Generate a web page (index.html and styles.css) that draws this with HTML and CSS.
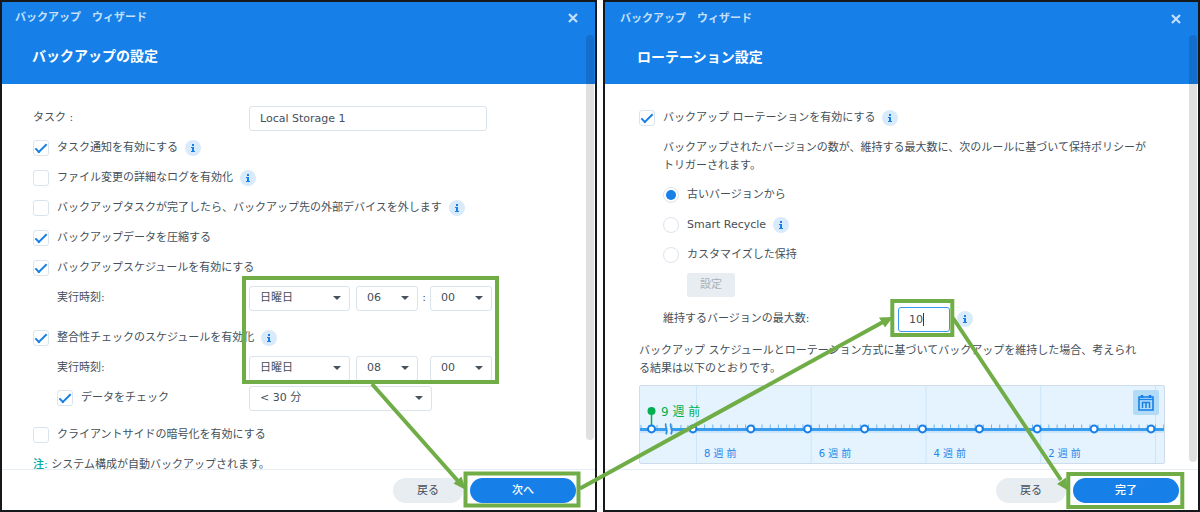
FILE: index.html
```html
<!DOCTYPE html>
<html lang="ja">
<head>
<meta charset="utf-8">
<meta name="viewport" content="width=device-width, initial-scale=1">
<title>バックアップ ウィザード</title>
<link rel="stylesheet" href="styles.css">
</head>
<body>
<svg class="sprite" aria-hidden="true">
  <symbol id="icon-info" viewBox="0 0 16 16">
    <circle cx="8" cy="8" r="8" fill="#d9eafb"/>
    <path d="M7 4h2v2H7zM6 7h3v4h1v1H6v-1h1V8H6z" fill="#167fe8"/>
  </symbol>
  <symbol id="icon-close" viewBox="0 0 10 10">
    <path d="M1 1l8 8M9 1l-8 8" stroke="#c4e0fb" stroke-width="2.2" fill="none"/>
  </symbol>
</svg>
<main class="stage">
  <section class="wizard">
    <header class="wizard-head">
      <div class="titlebar">
        <span>バックアップ　ウィザード</span>
        <button class="close" type="button" aria-label="閉じる"><svg><use href="#icon-close"/></svg></button>
      </div>
      <h1>バックアップの設定</h1>
    </header>
    <div class="wizard-body">
      <div class="row">
        <label class="field-label" for="task">タスク :</label>
        <input class="text-input" id="task" type="text" value="Local Storage 1">
      </div>
      <div class="row">
        <label class="choice"><input type="checkbox" checked>タスク通知を有効にする</label>
        <button class="info" type="button" aria-label="情報"><svg><use href="#icon-info"/></svg></button>
      </div>
      <div class="row">
        <label class="choice"><input type="checkbox">ファイル変更の詳細なログを有効化</label>
        <button class="info" type="button" aria-label="情報"><svg><use href="#icon-info"/></svg></button>
      </div>
      <div class="row">
        <label class="choice"><input type="checkbox">バックアップタスクが完了したら、バックアップ先の外部デバイスを外します</label>
        <button class="info" type="button" aria-label="情報"><svg><use href="#icon-info"/></svg></button>
      </div>
      <div class="row">
        <label class="choice"><input type="checkbox" checked>バックアップデータを圧縮する</label>
      </div>
      <div class="row">
        <label class="choice"><input type="checkbox" checked>バックアップスケジュールを有効にする</label>
      </div>
      <div class="row nested">
        <label class="field-label" for="day1">実行時刻:</label>
        <span class="select day"><select id="day1"><option>日曜日</option></select></span>
        <span class="select time"><select aria-label="時"><option>06</option></select></span>
        <span class="colon">:</span>
        <span class="select time"><select aria-label="分"><option>00</option></select></span>
      </div>
      <div class="row group">
        <label class="choice"><input type="checkbox" checked>整合性チェックのスケジュールを有効化</label>
        <button class="info" type="button" aria-label="情報"><svg><use href="#icon-info"/></svg></button>
      </div>
      <div class="row nested">
        <label class="field-label" for="day2">実行時刻:</label>
        <span class="select day"><select id="day2"><option>日曜日</option></select></span>
        <span class="select time"><select aria-label="時"><option>08</option></select></span>
        <span class="colon"></span>
        <span class="select time"><select aria-label="分"><option>00</option></select></span>
      </div>
      <div class="row nested">
        <label class="choice field-label"><input type="checkbox" checked>データをチェック</label>
        <span class="select limit"><select aria-label="チェック時間"><option>&lt; 30 分</option></select></span>
      </div>
      <div class="row group">
        <label class="choice"><input type="checkbox">クライアントサイドの暗号化を有効にする</label>
      </div>
      <p class="note"><b>注:</b> システム構成が自動バックアップされます。</p>
    </div>
    <footer class="wizard-foot">
      <button class="btn" type="button">戻る</button>
      <button class="btn primary" type="button">次へ</button>
    </footer>
    <div class="scroll-thumb"></div>
  </section>

  <section class="wizard rotation">
    <header class="wizard-head">
      <div class="titlebar">
        <span>バックアップ　ウィザード</span>
        <button class="close" type="button" aria-label="閉じる"><svg><use href="#icon-close"/></svg></button>
      </div>
      <h1>ローテーション設定</h1>
    </header>
    <div class="wizard-body">
      <div class="row">
        <label class="choice"><input type="checkbox" checked>バックアップ ローテーションを有効にする</label>
        <button class="info" type="button" aria-label="情報"><svg><use href="#icon-info"/></svg></button>
      </div>
      <p class="policy">バックアップされたバージョンの数が、維持する最大数に、次のルールに基づいて保持ポリシーが<br>トリガーされます。</p>
      <div class="row nested">
        <label class="choice"><input type="radio" name="policy" checked>古いバージョンから</label>
      </div>
      <div class="row nested">
        <label class="choice"><input type="radio" name="policy">Smart Recycle</label>
        <button class="info" type="button" aria-label="情報"><svg><use href="#icon-info"/></svg></button>
      </div>
      <div class="row nested">
        <label class="choice"><input type="radio" name="policy">カスタマイズした保持</label>
      </div>
      <div class="row deep">
        <button class="btn-flat" type="button" disabled>設定</button>
      </div>
      <div class="row nested versions">
        <label class="versions-label" for="max">維持するバージョンの最大数:</label>
        <span class="number"><input id="max" type="text" value="10"><i class="caret"></i></span>
        <button class="info" type="button" aria-label="情報"><svg><use href="#icon-info"/></svg></button>
      </div>
      <p class="result">バックアップ スケジュールとローテーション方式に基づいてバックアップを維持した場合、考えられ<br>る結果は以下のとおりです。</p>
      <div class="timeline">
        <svg class="chart" viewBox="0 0 525 77">
          <path d="M56.5 0v77M171.5 0v77M286.5 0v77M401.5 0v77M516.5 0v77" stroke="#c9e5f9"/>
          <path d="M1 39v4M9 39v4M17 39v4M32 39v4M41 39v4M48 39v4" stroke="#6fb5f0"/>
          <path d="M56 41H525" stroke="#6fb5f0" stroke-width="5" stroke-dasharray="1 7.214"/>
          <path d="M0 43.5H525" stroke="#3a9cec" stroke-width="3"/>
          <path d="M0 46H525" stroke="#b5d9f6"/>
          <path d="M26 38h5v10h-5z" fill="#e5f3fe"/>
          <path d="M26 37.500c-2 3 3 6 0 11M31 37.500c-2 3 3 6 0 11" stroke="#2f8fe8" stroke-width="1.700" fill="none"/>
          <path d="M11.5 25v16" stroke="#00b050" stroke-width="1.5"/>
          <circle cx="11.500" cy="25" r="4" fill="#00b050"/>
          <g fill="#fff" stroke="#167fe8" stroke-width="2">
            <circle cx="11.500" cy="43" r="3.500"/><circle cx="53" cy="43" r="3.500"/><circle cx="111" cy="43" r="3.500"/><circle cx="168" cy="43" r="3.500"/><circle cx="225" cy="43" r="3.500"/><circle cx="283" cy="43" r="3.500"/><circle cx="340" cy="43" r="3.500"/><circle cx="398" cy="43" r="3.500"/><circle cx="455" cy="43" r="3.500"/><circle cx="512" cy="43" r="3.500"/>
          </g>
          <text class="oldest" x="21" y="30">9 週 前</text>
          <text x="64" y="71">8 週 前</text>
          <text x="179" y="71">6 週 前</text>
          <text x="294" y="71">4 週 前</text>
          <text x="409" y="71">2 週 前</text>
        </svg>
        <button class="calendar" type="button" aria-label="カレンダー">
          <svg viewBox="0 0 16 16" fill="none" stroke="#167fe8">
            <path d="M1 2h14v13H1z" stroke-width="1.600"/>
            <path d="M1 4.500h14" stroke-width="1.300"/>
            <path d="M4 0v3M12 0v3" stroke-width="2.500"/>
            <path d="M4.500 13V7.500h7V13M8 7.500V13" stroke-width="1.500"/>
          </svg>
        </button>
      </div>
    </div>
    <footer class="wizard-foot">
      <button class="btn" type="button">戻る</button>
      <button class="btn primary" type="button">完了</button>
    </footer>
    <div class="scroll-thumb"></div>
  </section>

  <svg class="callouts" viewBox="0 0 1200 512" aria-hidden="true">
    <g fill="none" stroke="#70ad47" stroke-width="4">
      <rect x="244" y="278" width="253" height="104"/>
      <rect x="465.500" y="473.500" width="113" height="32"/>
      <rect x="892.300" y="301" width="60" height="34"/>
      <rect x="1068.300" y="474" width="114" height="33"/>
      <path d="M372 384L458 481M580 488.500L883 322M953 318L1061 480"/>
    </g>
    <path d="M466 490L453.500 483.500L461.500 476.500zM893 317L885 327.500L879 317.500zM1068 490.500L1057 484L1066 477.500z" fill="#70ad47"/>
  </svg>
</main>
</body>
</html>
```
FILE: styles.css
```css
*, *::before, *::after { box-sizing: border-box; }

body {
  margin: 0;
  background: #fff;
  color: #454f59;
  font: 11px/18px "DejaVu Sans", "Noto Sans CJK JP", sans-serif;
}

input, select, button { font: inherit; color: inherit; }
button { border: 0; padding: 0; background: none; }
p { margin: 0; }
.sprite { display: none; }

.stage {
  position: relative;
  display: flex;
  gap: 6px;
  min-height: 100vh;
}

.wizard {
  position: relative;
  flex: 1 1 0;
  min-width: 0;
  display: flex;
  flex-direction: column;
  height: 100vh;
  border: 2px solid #16191c;
}

.wizard-head {
  flex: none;
  height: 82px;
  padding: 7px 17px 0 13px;
  background: #167fe8;
  color: #fff;
}
.titlebar {
  display: flex;
  justify-content: space-between;
  align-items: center;
  color: #c4e0fb;
  font-weight: 700;
}
.close { display: flex; }
.close svg { width: 10px; height: 10px; }
h1 {
  margin: 18px 0 0 17px;
  font-size: 14px;
  line-height: 22px;
  font-weight: 700;
}

.wizard-body {
  flex: 1;
  min-height: 0;
  overflow: hidden;
  padding: 19px 30px 0 31px;
}
.row { display: flex; align-items: center; height: 30px; }
.nested { padding-left: 24px; }
.deep { padding-left: 48px; }
.group { margin-top: 10px; }
.group:last-of-type { margin-top: 7px; }
.field-label { flex: none; width: 216px; }
.nested .field-label { width: 192px; }

.choice { display: flex; align-items: center; gap: 8px; white-space: nowrap; }
.choice input {
  appearance: none;
  flex: none;
  display: grid;
  place-items: center;
  width: 16px;
  height: 16px;
  margin: 0;
  border: 1px solid #dbe4ed;
  border-radius: 3px;
  background: #fff;
}
.choice input[type="radio"] { border-radius: 50%; }
.choice input[type="checkbox"]:checked::before {
  content: "";
  width: 12px;
  height: 6px;
  margin-bottom: 3px;
  border: solid #167fe8;
  border-width: 0 0 2px 2px;
  transform: rotate(-45deg);
}
.choice input[type="radio"]:checked::before {
  content: "";
  width: 10px;
  height: 10px;
  border-radius: 50%;
  background: #167fe8;
}

.info { display: flex; margin-left: 7px; }
.info svg { width: 16px; height: 16px; }

.text-input, .select select {
  height: 25px;
  border: 1px solid #dbe4ed;
  border-radius: 3px;
  background: #fff;
  padding: 0 10px;
}
.text-input { width: 238px; }
.select { position: relative; display: flex; }
.select select { appearance: none; width: 100%; }
.select::after {
  content: "";
  position: absolute;
  right: 9px;
  top: 10px;
  border: 4px solid transparent;
  border-top-color: #46525e;
  border-bottom: 0;
  pointer-events: none;
}
.day { width: 101px; margin-right: 6px; }
.time { width: 62px; }
.limit { width: 183px; }
.colon { width: 12px; text-align: center; }

.note { margin-top: 6px; }
.note b { color: #00a99d; font-weight: 500; }

.wizard-foot {
  flex: none;
  display: flex;
  justify-content: flex-end;
  gap: 7px;
  height: 41px;
  padding: 8px 19px 0;
  border-top: 1px solid #e6edf3;
}
.btn {
  width: 70px;
  height: 25px;
  border-radius: 13px;
  background: #e8edf1;
}
.primary { width: 106px; background: #167fe8; color: #fff; font-weight: 500; }

.scroll-thumb {
  position: absolute;
  top: 33px;
  right: 1px;
  bottom: 70px;
  width: 8px;
  border-radius: 4px;
  background: rgba(0, 0, 0, 0.12);
}

.rotation .wizard-head { padding-left: 15px; }
.rotation .titlebar { padding-top: 1px; }
.rotation .wizard-body { padding: 19px 33px 0 34px; }
.rotation .scroll-thumb { bottom: 48px; }
.policy { margin: 6px 0 5px 24px; white-space: nowrap; }
.btn-flat {
  width: 48px;
  height: 24px;
  border-radius: 2px;
  background: #e8edf1;
  color: #a9b1b8;
}
.versions { margin-top: 4px; }
.versions-label { flex: none; width: 235px; }
.number { position: relative; display: flex; }
.number input {
  width: 52px;
  height: 25px;
  padding: 0 10px;
  border: 1px solid #3c97f0;
  border-radius: 3px;
  outline: 0;
  background: #fff;
}
.caret {
  position: absolute;
  left: 25px;
  top: 6px;
  width: 1px;
  height: 13px;
  background: #303840;
}
.result { margin-top: 8px; white-space: nowrap; }

.timeline {
  position: relative;
  margin-top: 7px;
  border: 1px solid #cddce8;
  border-radius: 2px;
  background: #e5f3fe;
}
.chart { display: block; width: 100%; }
.chart text { font-size: 10px; fill: #2186ea; }
.chart .oldest { font-size: 12px; fill: #00b050; }
.calendar {
  position: absolute;
  top: 4px;
  right: 5px;
  display: grid;
  place-items: center;
  width: 26px;
  height: 25px;
  border-radius: 2px;
  background: #b2dbf8;
}
.calendar svg { width: 16px; height: 16px; }

.callouts {
  position: absolute;
  inset: 0;
  width: 100%;
  height: 100%;
  pointer-events: none;
}
```
